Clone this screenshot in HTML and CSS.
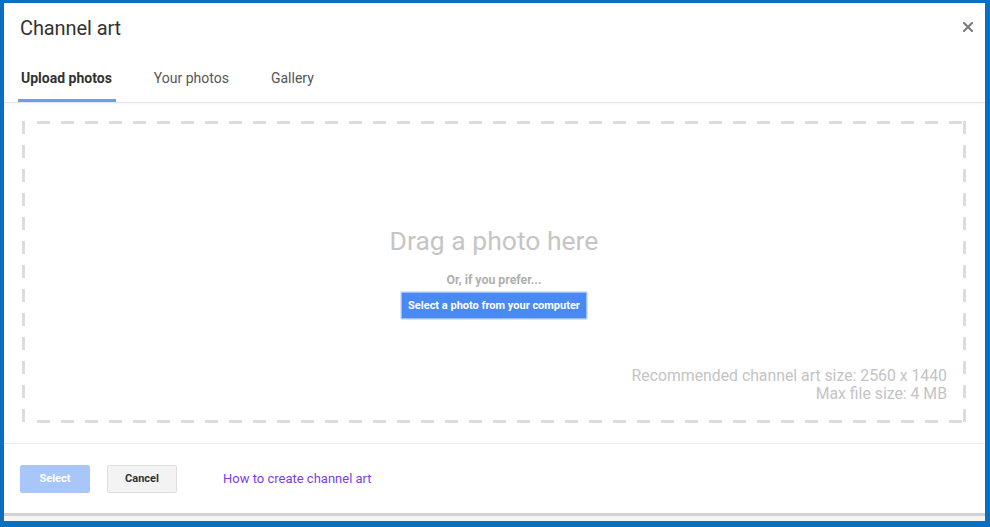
FILE: index.html
```html
<!DOCTYPE html>
<html>
<head>
<meta charset="utf-8">
<link rel="stylesheet" href="styles.css">
</head>
<body>
<div class="frame">
  <div class="dialog">
    <div class="header">
      <div class="title">Channel art</div>
      <svg class="close" width="10" height="10" viewBox="0 0 10 10"><path d="M1 1L9 9M9 1L1 9" stroke="#7a7a7a" stroke-width="2" stroke-linecap="square"/></svg>
    </div>
    <div class="tabs">
      <div class="tab active">Upload photos</div>
      <div class="tab">Your photos</div>
      <div class="tab">Gallery</div>
    </div>
    <div class="body">
      <div class="dropzone">
        <div class="center">
          <div class="drag">Drag a photo here</div>
          <div class="prefer">Or, if you prefer...</div>
          <button class="pick">Select a photo from your computer</button>
        </div>
        <div class="info">
          <div>Recommended channel art size: 2560 x 1440</div>
          <div>Max file size: 4 MB</div>
        </div>
      </div>
    </div>
    <div class="footer">
      <button class="btn select">Select</button>
      <button class="btn cancel">Cancel</button>
      <a class="link" href="#">How to create channel art</a>
    </div>
  </div>
  <div class="behind"></div>
</div>
</body>
</html>
```
FILE: styles.css
```css
html, body {
  margin: 0;
  padding: 0;
  background: #ffffff;
}
body {
  font-family: Roboto, "Liberation Sans", Arial, sans-serif;
}
.frame {
  width: 990px;
  height: 527px;
  box-sizing: border-box;
  border-style: solid;
  border-color: #0a6fc1;
  border-width: 3px 5px 6px 4px;
  display: flex;
  flex-direction: column;
  background: #ffffff;
}
.dialog {
  flex: 1;
  display: flex;
  flex-direction: column;
}
.header {
  height: 50px;
  display: flex;
  align-items: center;
  justify-content: space-between;
  padding: 0 12px 0 16px;
}
.title {
  font-size: 20px;
  color: #333333;
  letter-spacing: -0.1px;
}
.close {
  display: block;
  margin-top: -2px;
}
.tabs {
  display: flex;
  gap: 35px;
  padding-left: 14px;
  padding-top: 2px;
  border-bottom: 1px solid #e6e6e6;
  box-shadow: 0 1px 2px rgba(0,0,0,0.04);
}
.tab {
  height: 44px;
  line-height: 46px;
  padding: 0 4px 0 3px;
  font-size: 14px;
  color: #555555;
  border-bottom: 3px solid transparent;
}
.tab.active {
  font-weight: bold;
  color: #333333;
  border-bottom-color: #6d9cf0;
}
.body {
  flex: 1;
  padding: 18px 19px 20px 18px;
  display: flex;
  border-bottom: 1px solid #ececec;
}
.dropzone {
  flex: 1;
  display: grid;
  grid-template-rows: 1fr auto 1fr;
  background-image:
    repeating-linear-gradient(90deg, #dcdcdc 0 13px, transparent 13px 24px),
    repeating-linear-gradient(90deg, #dcdcdc 0 13px, transparent 13px 24px),
    repeating-linear-gradient(180deg, #dcdcdc 0 13px, transparent 13px 24px),
    repeating-linear-gradient(180deg, #dcdcdc 0 13px, transparent 13px 24px);
  background-size: 100% 3px, 100% 3px, 3px 100%, 3px 100%;
  background-position: 15px 0, 15px 100%, 0 0, 100% 0;
  background-repeat: no-repeat;
}
.center {
  grid-row: 2;
  display: flex;
  flex-direction: column;
  align-items: center;
}
.drag {
  font-size: 26.5px;
  color: #c5c5c5;
  line-height: 32px;
}
.prefer {
  margin-top: 16px;
  font-size: 12.3px;
  font-weight: bold;
  color: #b0b0b0;
  line-height: 14px;
}
.pick {
  margin-top: 5px;
  height: 27px;
  padding: 0 6px;
  font-family: inherit;
  font-size: 11px;
  font-weight: bold;
  color: #ffffff;
  background: #4889f4;
  border: 1px solid #9dbff8;
  box-shadow: 0 0 0 1px #d7e5fc;
  border-radius: 1px;
}
.info {
  grid-row: 3;
  align-self: end;
  text-align: right;
  padding: 0 19px 20px 0;
  font-size: 15.8px;
  line-height: 18px;
  color: #c4c4c4;
}
.footer {
  height: 69px;
  display: flex;
  align-items: center;
  padding-left: 16px;
}
.btn {
  width: 70px;
  height: 28px;
  font-family: inherit;
  font-size: 11px;
  font-weight: bold;
  border-radius: 2px;
}
.select {
  background: #a8c6f9;
  color: #ffffff;
  border: 1px solid #a8c6f9;
}
.cancel {
  margin-left: 17px;
  background: #f3f3f3;
  color: #333333;
  border: 1px solid #dedede;
}
.link {
  margin-left: 46px;
  font-size: 13px;
  color: #7a3fe3;
  text-decoration: none;
}
.behind {
  height: 5px;
  border-top: 3px solid #d2d2d2;
  background: #f5f5f5;
}
```
